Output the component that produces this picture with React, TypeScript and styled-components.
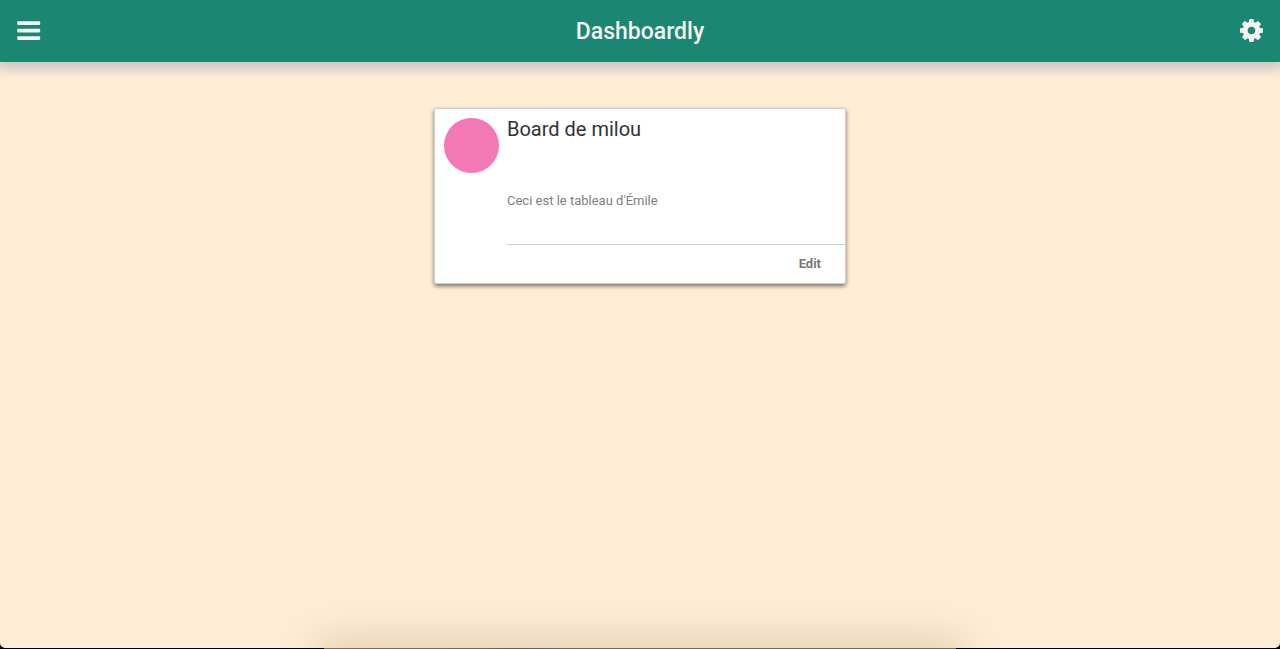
import React from 'react';
import styled, { createGlobalStyle } from 'styled-components';

const GlobalStyle = createGlobalStyle`
  *, *::before, *::after { box-sizing: border-box; }
  body {
    margin: 0;
    background: #000;
    font-family: Roboto, "Liberation Sans", sans-serif;
  }
`;

const Page = styled.div`
  display: flex;
  flex-direction: column;
  min-height: 100vh;
  background: #000;
`;

const Screen = styled.div`
  position: relative;
  flex: 1;
  display: flex;
  flex-direction: column;
  overflow: hidden;
  background: #ffeed5;
  border-radius: 0 0 5px 5px;
`;

const Header = styled.header`
  display: flex;
  align-items: center;
  justify-content: space-between;
  height: 62px;
  padding: 0 17px;
  background: #1b8671;
  color: #f4f4f4;
  box-shadow: 0 5px 10px 3px #d1c8c6;
`;

const Title = styled.h1`
  margin: 0;
  font-size: 23px;
  line-height: 27px;
  font-weight: 500;
`;

const IconButton = styled.button`
  display: flex;
  padding: 0;
  border: 0;
  background: none;
  color: inherit;
  cursor: pointer;
`;

const Main = styled.main`
  display: flex;
  flex-wrap: wrap;
  align-items: flex-start;
  justify-content: center;
  padding: 46px 16px;
`;

const Card = styled.article`
  display: flex;
  width: 100%;
  max-width: 412px;
  background: #fff;
  border: 1px solid #ccd0d2;
  border-radius: 2px;
  box-shadow: 0 2px 4px rgba(0, 0, 0, 0.55);
`;

const Avatar = styled.div`
  flex: none;
  width: 55px;
  height: 55px;
  margin: 9px 8px 9px 9px;
  border-radius: 50%;
  background: #f478b6;
`;

const CardBody = styled.div`
  flex: 1;
  display: flex;
  flex-direction: column;
`;

const CardTitle = styled.h2`
  margin: 8px 0 0;
  font-size: 20px;
  line-height: 24px;
  font-weight: 400;
  color: #333;
`;

const CardText = styled.p`
  margin: 0;
  padding: 51px 0 35px;
  font-size: 13px;
  line-height: 17px;
  color: #808080;
`;

const CardActions = styled.div`
  display: flex;
  justify-content: flex-end;
  padding: 0 24px;
  border-top: 1px solid #ccd0d2;
`;

const EditButton = styled.button`
  padding: 0;
  border: 0;
  background: none;
  font: bold 13px/38px Roboto, "Liberation Sans", sans-serif;
  color: #777;
  cursor: pointer;
`;

const DockShadow = styled.div`
  position: absolute;
  left: 25%;
  right: 25%;
  bottom: -20px;
  height: 20px;
  box-shadow: 0 0 44px 4px rgba(110, 90, 60, 0.3);
`;

const DockEdge = styled.div`
  width: 632px;
  max-width: 100%;
  height: 1px;
  margin: 0 auto;
  background: linear-gradient(90deg, #8a6a50, #80654c 25%, #66604a 30%, #80664c 40%, #7a6a4c);
`;

const BarsIcon = () => (
  <svg width="24" height="24" viewBox="0 0 24 24" fill="currentColor" aria-hidden="true">
    <rect x="0.200" y="2.200" width="23" height="3.700" rx="0.800" />
    <rect x="0.200" y="9.700" width="23" height="3.700" rx="0.800" />
    <rect x="0.200" y="17.200" width="23" height="3.700" rx="0.800" />
  </svg>
);

const CogIcon = () => (
  <svg width="24" height="24" viewBox="64 128 1600 1600" fill="currentColor" aria-hidden="true">
    <path d="M1152 896q0-106-75-181t-181-75-181 75-75 181 75 181 181 75 181-75 75-181zm512-109v222q0 12-8 23t-20 13l-185 28q-19 54-39 91 35 50 107 138 10 12 10 25t-9 23q-27 37-99 108t-94 71q-12 0-26-9l-138-108q-44 23-91 38-16 136-29 186-7 28-36 28h-222q-14 0-24.500-8.500t-11.500-21.500l-28-184q-49-16-90-37l-141 107q-10 9-25 9-14 0-25-11-126-114-165-168-7-10-7-23 0-12 8-23 15-21 51-66.500t54-70.500q-27-50-41-99l-183-27q-13-2-21-12.500t-8-23.500v-222q0-12 8-23t19-13l186-28q14-46 39-92-40-57-107-138-10-12-10-24 0-10 9-23 26-36 98.500-107.500t94.500-71.500q13 0 26 10l138 107q44-23 91-38 16-136 29-186 7-28 36-28h222q14 0 24.500 8.500t11.500 21.500l28 184q49 16 90 37l142-107q9-9 24-9 13 0 25 10 129 119 165 170 7 8 7 22 0 12-8 23-15 21-51 66.500t-54 70.500q26 50 41 98l183 28q13 2 21 12.500t8 23.500z" />
  </svg>
);

interface Board {
  title: string;
  description: string;
}

const boards: Board[] = [
  { title: 'Board de milou', description: "Ceci est le tableau d'Émile" },
];

const BoardCard = ({ title, description }: Board) => (
  <Card>
    <Avatar />
    <CardBody>
      <CardTitle>{title}</CardTitle>
      <CardText>{description}</CardText>
      <CardActions>
        <EditButton type="button">Edit</EditButton>
      </CardActions>
    </CardBody>
  </Card>
);

export default function App() {
  return (
    <Page>
      <GlobalStyle />
      <Screen>
        <Header>
          <IconButton type="button" aria-label="Menu"><BarsIcon /></IconButton>
          <Title>Dashboardly</Title>
          <IconButton type="button" aria-label="Settings"><CogIcon /></IconButton>
        </Header>
        <Main>
          {boards.map((board) => (
            <BoardCard key={board.title} {...board} />
          ))}
        </Main>
        <DockShadow />
      </Screen>
      <DockEdge />
    </Page>
  );
}
